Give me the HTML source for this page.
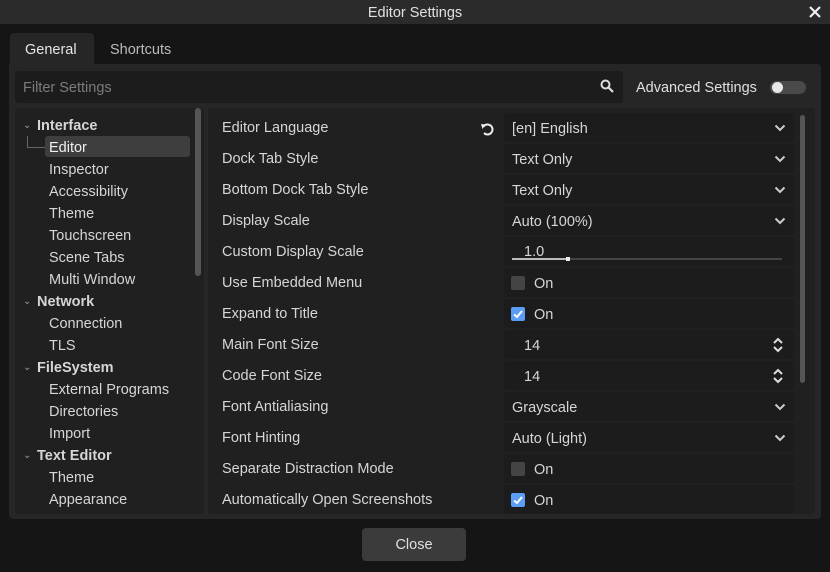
<html><head><style>
body{margin:0;width:830px;height:572px;background:#151515;font-family:"Liberation Sans",sans-serif;font-size:14.5px;color:#d6d6d6;position:relative;overflow:hidden}
.a{position:absolute}
.t{white-space:nowrap}
</style></head><body>
<div class="a" style="left:0;top:0;width:830px;height:24px;background:#2b2b2b"></div>
<div class="a t" style="left:0;top:5px;width:830px;text-align:center;color:#e0e0e0">Editor Settings</div>
<svg class="a" style="left:808px;top:5px" width="14" height="14"><path d="M2 2L12 12M12 2L2 12" stroke="#eee" stroke-width="2.2"/></svg>
<div class="a" style="left:10px;top:33px;width:84px;height:32px;background:#262626;border-radius:4px 4px 0 0"></div>
<div class="a t" style="left:25px;top:42px;color:#e6e6e6">General</div>
<div class="a t" style="left:110px;top:42px;color:#bbb">Shortcuts</div>
<div class="a" style="left:9px;top:64px;width:812px;height:455px;background:#262626;border-radius:0 4px 4px 4px"></div>
<div class="a" style="left:15px;top:71px;width:608px;height:32px;background:#1c1c1c;border-radius:4px"></div>
<div class="a t" style="left:23px;top:80px;color:#7c7c7c">Filter Settings</div>
<svg class="a" style="left:600px;top:79px" width="14" height="14"><circle cx="5.5" cy="5.5" r="4" fill="none" stroke="#ddd" stroke-width="2"/><path d="M8.5 8.5L13 13" stroke="#ddd" stroke-width="2.2"/></svg>
<div class="a t" style="left:636px;top:80px;color:#e0e0e0">Advanced Settings</div>
<div class="a" style="left:770px;top:81px;width:36px;height:13px;background:#4a4a4a;border-radius:7px"></div>
<div class="a" style="left:772px;top:82px;width:11px;height:11px;background:#e8e8e8;border-radius:50%"></div>
<div class="a" style="left:15px;top:108px;width:189px;height:406px;background:#202020;border-radius:4px"></div>
<div class="a" style="left:195px;top:108px;width:6px;height:168px;background:#555;border-radius:3px"></div>
<div class="a" style="left:45px;top:136px;width:145px;height:21px;background:#3e3e3e;border-radius:3px"></div>
<div class="a" style="left:27px;top:136px;width:17px;height:11px;border-left:1px solid #666;border-bottom:1px solid #666"></div>
<div class="a" style="left:0;top:2px;line-height:22px">
<div class="a t" style="left:23px;top:113px;color:#999;font-size:10px">⌄</div>
<div class="a t" style="left:37px;top:113px;font-weight:bold">Interface</div>
<div class="a t" style="left:49px;top:135px;color:#f0f0f0">Editor</div>
<div class="a t" style="left:49px;top:157px">Inspector</div>
<div class="a t" style="left:49px;top:179px">Accessibility</div>
<div class="a t" style="left:49px;top:201px">Theme</div>
<div class="a t" style="left:49px;top:223px">Touchscreen</div>
<div class="a t" style="left:49px;top:245px">Scene Tabs</div>
<div class="a t" style="left:49px;top:267px">Multi Window</div>
<div class="a t" style="left:23px;top:289px;color:#999;font-size:10px">⌄</div>
<div class="a t" style="left:37px;top:289px;font-weight:bold">Network</div>
<div class="a t" style="left:49px;top:311px">Connection</div>
<div class="a t" style="left:49px;top:333px">TLS</div>
<div class="a t" style="left:23px;top:355px;color:#999;font-size:10px">⌄</div>
<div class="a t" style="left:37px;top:355px;font-weight:bold">FileSystem</div>
<div class="a t" style="left:49px;top:377px">External Programs</div>
<div class="a t" style="left:49px;top:399px">Directories</div>
<div class="a t" style="left:49px;top:421px">Import</div>
<div class="a t" style="left:23px;top:443px;color:#999;font-size:10px">⌄</div>
<div class="a t" style="left:37px;top:443px;font-weight:bold">Text Editor</div>
<div class="a t" style="left:49px;top:465px">Theme</div>
<div class="a t" style="left:49px;top:487px">Appearance</div>
</div>
<div class="a" style="left:208px;top:108px;width:607px;height:406px;background:#202020;border-radius:4px"></div>
<div class="a" style="left:800px;top:115px;width:5px;height:268px;background:#555;border-radius:3px"></div>
<div id="rows"></div>
<svg class="a" style="left:479px;top:121px" width="16" height="16"><path d="M4.5 5.5A5 5 0 1 1 5 12" fill="none" stroke="#eee" stroke-width="2"/><path d="M2 3L6.5 3.5L3.5 8Z" fill="#eee"/></svg>
<div class="a" style="left:362px;top:528px;width:104px;height:33px;background:#3b3b3b;border-radius:4px"></div>
<div class="a t" style="left:362px;top:537px;width:104px;text-align:center;color:#e0e0e0">Close</div>
<script>
var R=[["Editor Language","[en] English","d"],["Dock Tab Style","Text Only","d"],["Bottom Dock Tab Style","Text Only","d"],["Display Scale","Auto (100%)","d"],["Custom Display Scale","1.0","s"],["Use Embedded Menu","On","c0"],["Expand to Title","On","c1"],["Main Font Size","14","n"],["Code Font Size","14","n"],["Font Antialiasing","Grayscale","d"],["Font Hinting","Auto (Light)","d"],["Separate Distraction Mode","On","c0"],["Automatically Open Screenshots","On","c1"]];
var h="";R.forEach(function(r,i){var y=113+i*31;
h+='<div class="a" style="left:504px;top:'+y+'px;width:290px;height:29px;background:#1c1c1c;border-radius:3px"></div>';
h+='<div class="a t" style="left:222px;top:'+(y+7)+'px">'+r[0]+'</div>';
if(r[2]=="d"){h+='<div class="a t" style="left:512px;top:'+(y+8)+'px">'+r[1]+'</div><svg class="a" style="left:774px;top:'+(y+11)+'px" width="12" height="8"><path d="M1.5 1.5L6 6L10.5 1.5" fill="none" stroke="#ccc" stroke-width="2"/></svg>';}
if(r[2]=="s"){h+='<div class="a t" style="left:524px;top:'+(y+7)+'px">'+r[1]+'</div><div class="a" style="left:512px;top:'+(y+21)+'px;width:270px;height:2px;background:#444"></div><div class="a" style="left:512px;top:'+(y+21)+'px;width:56px;height:2px;background:#bbb"></div><div class="a" style="left:566px;top:'+(y+20)+'px;width:4px;height:4px;background:#eee"></div>';}
if(r[2]=="n"){h+='<div class="a t" style="left:524px;top:'+(y+8)+'px">'+r[1]+'</div><svg class="a" style="left:772px;top:'+(y+7)+'px" width="12" height="16"><path d="M2 6L6 2L10 6M2 10L6 14L10 10" fill="none" stroke="#ddd" stroke-width="2"/></svg>';}
if(r[2][0]=="c"){var on=r[2]=="c1";h+='<div class="a" style="left:511px;top:'+(y+8)+'px;width:14px;height:14px;border-radius:2px;background:'+(on?'#5b9cf5':'#444')+'"></div>'+(on?'<svg class="a" style="left:511px;top:'+(y+8)+'px" width="14" height="14"><path d="M3 7.5L6 10L11 4" fill="none" stroke="#fff" stroke-width="2"/></svg>':'')+'<div class="a t" style="left:534px;top:'+(y+8)+'px">On</div>';}
});document.getElementById("rows").innerHTML=h;
</script>
</body></html>
